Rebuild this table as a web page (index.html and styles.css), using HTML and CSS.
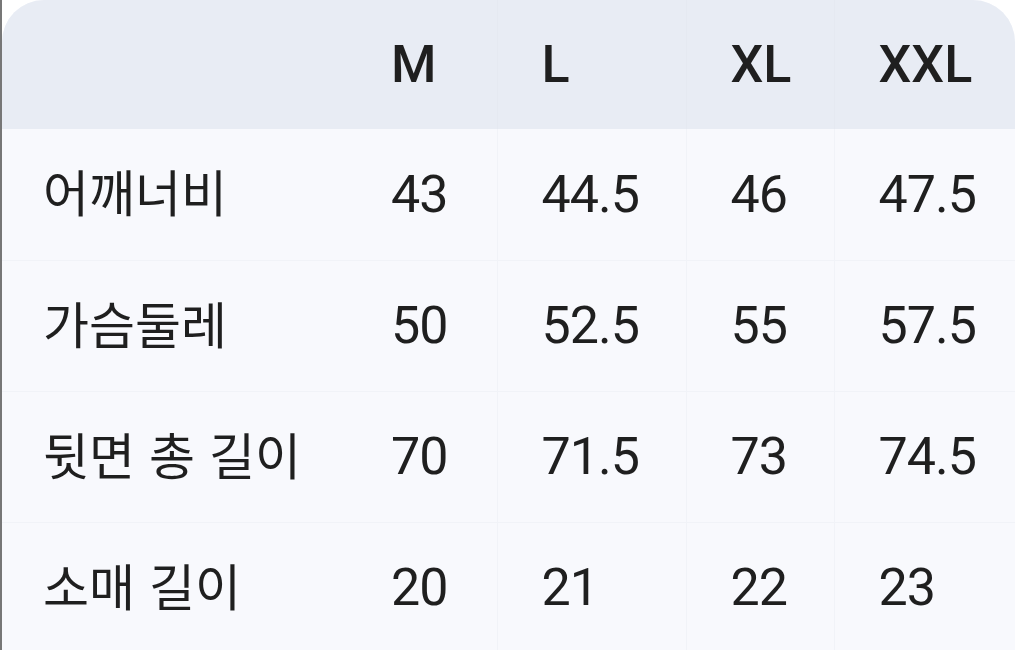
FILE: index.html
```html
<!DOCTYPE html>
<html lang="ko">
<head>
<meta charset="utf-8">
<link rel="stylesheet" href="styles.css">
</head>
<body>
<div class="frame">
  <div class="card">
    <table class="size-table">
      <colgroup>
        <col class="c-label"><col class="c-m"><col class="c-l"><col class="c-xl"><col class="c-xxl">
      </colgroup>
      <thead>
        <tr><th></th><th>M</th><th>L</th><th>XL</th><th>XXL</th></tr>
      </thead>
      <tbody>
        <tr><td class="label">어깨너비</td><td>43</td><td>44.5</td><td>46</td><td>47.5</td></tr>
        <tr><td class="label">가슴둘레</td><td>50</td><td>52.5</td><td>55</td><td>57.5</td></tr>
        <tr><td class="label">뒷면 총 길이</td><td>70</td><td>71.5</td><td>73</td><td>74.5</td></tr>
        <tr><td class="label">소매 길이</td><td>20</td><td>21</td><td>22</td><td>23</td></tr>
      </tbody>
    </table>
  </div>
</div>
</body>
</html>
```
FILE: styles.css
```css
html, body {
  margin: 0;
  padding: 0;
  background: #ffffff;
}
.frame {
  width: 1015px;
  height: 650px;
  border-left: 2px solid #777777;
  box-sizing: border-box;
  overflow: hidden;
}
.card {
  border-radius: 42px 42px 0 0;
  overflow: hidden;
  background: #f8f9fd;
  height: 700px;
}
.size-table {
  border-collapse: collapse;
  table-layout: fixed;
  width: 1013px;
  font-family: Roboto, "Noto Sans CJK KR", sans-serif;
  color: #1f1f1f;
}
.c-label { width: 345px; }
.c-m { width: 150px; }
.c-l { width: 189px; }
.c-xl { width: 148px; }
.c-xxl { width: 181px; }
.size-table th,
.size-table td {
  text-align: left;
  padding: 0 0 0 44px;
  border-right: 1px solid #f1f3f8;
  border-bottom: 1px solid #f1f3f8;
}
.size-table th:first-child,
.size-table td:first-child { border-right: none; }
.size-table th:last-child,
.size-table td:last-child { border-right: none; }
.size-table thead tr {
  background: #e8ecf4;
  height: 129px;
}
.size-table th {
  font-size: 52px;
  font-weight: 500;
  border-bottom: none;
  border-right-color: #e5e9f1;
}
.size-table tbody tr { height: 131px; }
.size-table td {
  font-size: 52px;
  font-weight: 400;
  letter-spacing: -1px;
}
.size-table td.label {
  font-family: "Noto Sans CJK KR", sans-serif;
  font-size: 50px;
  letter-spacing: 0;
  padding: 0 0 8px 41px;
}
```
